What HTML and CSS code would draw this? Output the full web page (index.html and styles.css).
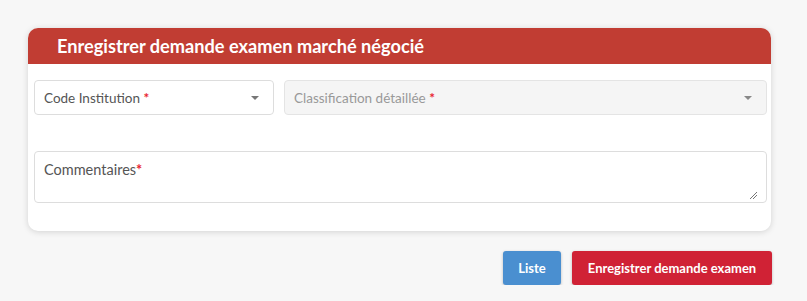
FILE: index.html
```html
<!DOCTYPE html>
<html lang="fr">
<head>
  <meta charset="UTF-8">
  <title>Enregistrer demande examen</title>
  <link rel="stylesheet" href="styles.css">
</head>
<body>
  <div class="card">
    <div class="card-header">Enregistrer demande examen marché négocié</div>
    <div class="card-body">
      <div class="row">
        <div class="select select-small">
          <span>Code Institution <b class="req">*</b></span>
          <i class="caret"></i>
        </div>
        <div class="select select-wide disabled">
          <span>Classification détaillée <b class="req">*</b></span>
          <i class="caret"></i>
        </div>
      </div>
      <div class="textarea">
        <span>Commentaires<b class="req">*</b></span>
        <svg class="grip" width="7" height="7" viewBox="0 0 7 7">
          <path d="M7 0 L0 7 M7 3 L3 7" stroke="#777" stroke-width="1"/>
        </svg>
      </div>
    </div>
  </div>

  <div class="actions">
    <button class="btn btn-blue">Liste</button>
    <button class="btn btn-red">Enregistrer demande examen</button>
  </div>
</body>
</html>
```

FILE: styles.css
```css
body {
  margin: 0;
  background: #f7f7f7;
  font-family: 'Lato', 'Noto Sans', sans-serif;
  color: #555;
}

.card {
  margin: 28px 0 0 28px;
  width: 743px;
  background: #fff;
  border-radius: 10px;
  box-shadow: 0 1px 6px rgba(0, 0, 0, 0.15);
  overflow: hidden;
}

.card-header {
  background: #c13d33;
  color: #fff;
  height: 36px;
  line-height: 36px;
  padding-left: 29px;
  font-size: 18.2px;
  font-weight: bold;
}

.card-body {
  padding: 16px 4px 28px 6px;
}

.row {
  display: flex;
  gap: 10px;
  margin-bottom: 36px;
}

.select {
  height: 35px;
  box-sizing: border-box;
  border: 1px solid #ddd;
  border-radius: 4px;
  display: flex;
  align-items: center;
  justify-content: space-between;
  padding: 0 14px 0 9px;
  font-size: 13.5px;
  color: #555;
}

.select-small {
  width: 240px;
}

.select-wide {
  flex: 1;
}

.select.disabled {
  background: #f5f5f5;
  color: #999;
  border-color: #e4e4e4;
}

.req {
  color: #e8232f;
  font-weight: bold;
}

.caret {
  width: 0;
  height: 0;
  border-left: 4px solid transparent;
  border-right: 4px solid transparent;
  border-top: 4px solid #777;
}

.disabled .caret {
  border-top-color: #888;
}

.textarea {
  height: 52px;
  box-sizing: border-box;
  border: 1px solid #ddd;
  border-radius: 4px;
  padding: 9px 9px;
  font-size: 14.5px;
  color: #555;
  display: flex;
  justify-content: space-between;
}

.grip {
  align-self: flex-end;
  margin: 0 0 -6px 0;
}

.actions {
  width: 772px;
  display: flex;
  justify-content: flex-end;
  gap: 11px;
  margin-top: 20px;
}

.btn {
  height: 34px;
  border: none;
  border-radius: 3px;
  color: #fff;
  font-family: 'Lato', 'Noto Sans', sans-serif;
  font-size: 13px;
  font-weight: bold;
  box-shadow: 0 1px 3px rgba(0, 0, 0, 0.25);
}

.btn-blue {
  background: #4a8fd0;
  width: 58px;
}

.btn-red {
  background: #d02235;
  width: 200px;
}
```
